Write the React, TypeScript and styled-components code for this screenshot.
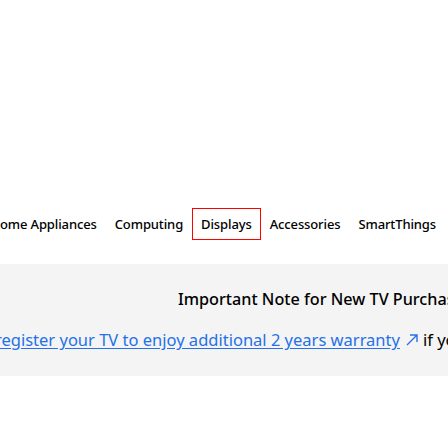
import React from 'react';
import styled, { createGlobalStyle } from 'styled-components';

const GlobalStyle = createGlobalStyle`
  html, body {
    margin: 0;
    padding: 0;
    background: #ffffff;
    overflow: hidden;
  }
  body {
    font-family: 'Noto Sans', 'Open Sans', sans-serif;
    color: #000;
  }
`;

const Page = styled.div`
  width: 448px;
  height: 448px;
  overflow: hidden;
  display: flex;
  flex-direction: column;
`;

const NavBar = styled.nav`
  height: 264px;
  display: flex;
  align-items: flex-start;
  justify-content: flex-end;
  padding: 208px 3px 0 0;
  box-sizing: border-box;
  white-space: nowrap;
`;

const NavItem = styled.a<{ $active?: boolean }>`
  display: flex;
  align-items: center;
  height: 32px;
  box-sizing: border-box;
  padding: 0 8px;
  border: 1px solid ${(p) => (p.$active ? '#f00' : 'transparent')};
  font-size: 13px;
  font-weight: 500;
  letter-spacing: -0.12px;
  color: #000;
  text-decoration: none;
  flex-shrink: 0;
`;

const Notice = styled.section`
  height: 112px;
  background: #f4f4f4;
  display: flex;
  flex-direction: column;
  padding-top: 23px;
  box-sizing: border-box;
  white-space: nowrap;
`;

const Title = styled.h2`
  margin: 0 0 0 178px;
  font-size: 16.2px;
  font-weight: 500;
  line-height: 24px;
`;

const Body = styled.p`
  margin: 17px 0 0 -5px;
  font-size: 16.5px;
  line-height: 24px;
`;

const Link = styled.a`
  color: #2471e8;
  text-decoration: underline;
  text-underline-offset: 2px;
`;

const Arrow = styled.svg`
  width: 14px;
  height: 14px;
  margin: 0 4px 0 5px;
  vertical-align: -1px;
`;

const items = ['Home Appliances', 'Computing', 'Displays', 'Accessories', 'SmartThings'];

export default function App() {
  return (
    <Page>
      <GlobalStyle />
      <NavBar>
        {items.map((item) => (
          <NavItem key={item} href="#" $active={item === 'Displays'}>
            {item}
          </NavItem>
        ))}
      </NavBar>
      <Notice>
        <Title>Important Note for New TV Purchases</Title>
        <Body>
          <Link href="#">register your TV to enjoy additional 2 years warranty</Link>
          <Arrow viewBox="0 0 14 14" fill="none" stroke="#2471e8" strokeWidth="1.4">
            <path d="M2 12 L12 2 M5 2 H12 V9" />
          </Arrow>
          if you have purchased
        </Body>
      </Notice>
    </Page>
  );
}
